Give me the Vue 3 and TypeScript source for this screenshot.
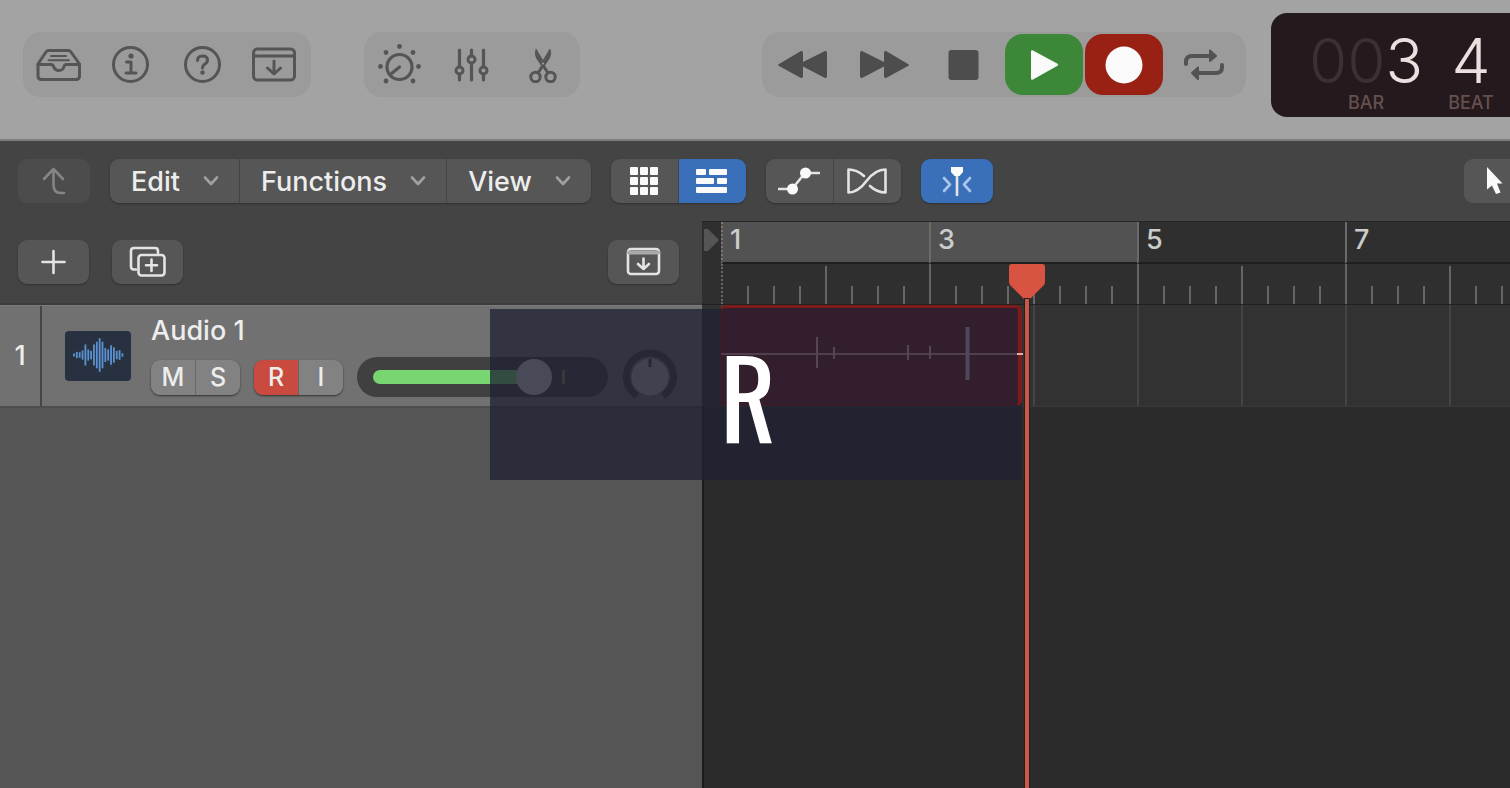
<script setup lang="ts">
import { computed, onBeforeUnmount, onMounted, ref } from 'vue'

interface Bar {
  number: number
  cycle: boolean
}

const barWidth = 104
const timelineStart = 721
const windowWidth = ref(window.innerWidth)
const onResize = () => {
  windowWidth.value = window.innerWidth
}
onMounted(() => window.addEventListener('resize', onResize))
onBeforeUnmount(() => window.removeEventListener('resize', onResize))

const bars = computed<Bar[]>(() => {
  const count = Math.max(1, Math.ceil((windowWidth.value - timelineStart) / barWidth))
  return Array.from({ length: count }, (_, i) => ({ number: i + 1, cycle: i < 4 }))
})
const beats = [1, 2, 3, 4]
const menus = ['Edit', 'Functions', 'View']
const volume = ref(74)
const fillWidth = computed(() => `${Math.round(volume.value * 2.2)}px`)
const waveBars = [4, 9, 8, 13, 30, 16, 12, 30, 38, 48, 38, 20, 16, 28, 22, 12, 14, 5]
</script>

<template>
  <div class="app">
    <header class="control-bar">
      <div class="group">
        <button class="tool" aria-label="Library">
          <svg width="46" height="36" viewBox="0 0 46 36" class="line">
            <path d="M2 17 L10 5 Q11 3.500 13 3.500 H32 Q34 3.500 35 5 L43.500 17 V29 Q43.500 32.500 40 32.500 H5.500 Q2 32.500 2 29 Z" />
            <path d="M2 17.500 H15 Q17 17.500 17.500 19.500 Q19 23.500 23 23.500 Q27 23.500 28 19.500 Q28.500 17.500 30.500 17.500 H43.500" />
            <path d="M15 9 H30 M12.500 13.200 H33" stroke-width="2" />
          </svg>
        </button>
        <button class="tool" aria-label="Inspector">
          <svg width="40" height="40" viewBox="0 0 40 40" class="line">
            <circle cx="19.500" cy="19.500" r="17" />
            <path d="M15.500 17 H20 V28 M15 28 H25" />
            <circle cx="20" cy="11" r="2.600" class="solid" />
          </svg>
        </button>
        <button class="tool" aria-label="Quick Help">
          <svg width="40" height="40" viewBox="0 0 40 40" class="line">
            <circle cx="19.500" cy="19.500" r="17" />
            <path d="M14.500 15.500 Q14.500 11 19.500 11 Q24.500 11 24.500 15 Q24.500 17.500 22 19 Q19.500 20.500 19.500 23" />
            <circle cx="19.500" cy="27.500" r="2.200" class="solid" />
          </svg>
        </button>
        <button class="tool" aria-label="Toolbar">
          <svg width="46" height="36" viewBox="0 0 46 36" class="line">
            <rect x="1.500" y="2" width="41" height="31" rx="4" />
            <path d="M2 9 H42 M22 14 V26.500 M15.500 21 L22 27 L28.500 21" />
          </svg>
        </button>
      </div>

      <div class="group">
        <button class="tool" aria-label="Smart Controls">
          <svg width="46" height="46" viewBox="0 0 46 46" class="line">
            <circle cx="22.500" cy="25" r="12.500" stroke-width="3.200" />
            <path d="M22.500 25 L14.500 31.500" stroke-width="3.200" />
            <g class="solid">
              <circle cx="22.500" cy="4.500" r="2.400" /><circle cx="9" cy="10.500" r="2.400" />
              <circle cx="36" cy="10.500" r="2.400" /><circle cx="3.500" cy="24.500" r="2.400" />
              <circle cx="41.500" cy="24.500" r="2.400" /><circle cx="9" cy="39" r="2.400" />
              <circle cx="36" cy="39" r="2.400" />
            </g>
          </svg>
        </button>
        <button class="tool" aria-label="Mixer">
          <svg width="36" height="36" viewBox="0 0 36 36" class="line">
            <path d="M5.500 3 V20 M5.500 27 V33 M17.500 3 V9 M17.500 16 V33 M29.500 3 V20 M29.500 27 V33" stroke-width="3.200" />
            <circle cx="5.500" cy="23.500" r="3.500" /><circle cx="17.500" cy="12.500" r="3.500" /><circle cx="29.500" cy="23.500" r="3.500" />
          </svg>
        </button>
        <button class="tool" aria-label="Editors">
          <svg width="32" height="36" viewBox="0 0 32 36" class="line">
            <circle cx="7.500" cy="30" r="4.700" /><circle cx="22.500" cy="30" r="4.700" />
            <path d="M10 26 L14.500 19 M20 26 L15.500 19" />
            <path d="M8 2.500 Q6.500 7 8.500 11 L14.500 20 L16.500 17 Z M22 2.500 Q23.500 7 21.500 11 L15.500 20 L13.500 17 Z" class="blade" />
          </svg>
        </button>
      </div>

      <div class="group transport">
        <button class="key" aria-label="Rewind">
          <svg width="52" height="32" viewBox="0 0 52 32" class="glyph">
            <path d="M1 15 L23 2 Q25 1.500 25 4 V13 L47 2 Q49 1.500 49 4 V27 Q49 29.500 47 29 L25 17.500 V27 Q25 29.500 23 29 L1 17 Q-1 16 1 15 Z" />
          </svg>
        </button>
        <button class="key" aria-label="Forward">
          <svg width="52" height="32" viewBox="0 0 52 32" class="glyph">
            <path d="M50 15 L28 2 Q26 1.500 26 4 V13 L4 2 Q2 1.500 2 4 V27 Q2 29.500 4 29 L26 17.500 V27 Q26 29.500 28 29 L50 17 Q52 16 50 15 Z" />
          </svg>
        </button>
        <button class="key" aria-label="Stop">
          <svg width="32" height="32" viewBox="0 0 32 32" class="glyph"><rect x="0.500" y="1" width="30" height="30" rx="3" /></svg>
        </button>
        <button class="key play" aria-label="Play">
          <svg width="30" height="32" viewBox="0 0 30 32" class="light">
            <path d="M2 2.500 Q2 0.500 4 1.500 L28.500 14.700 Q30 15.700 28.500 16.800 L4 30.500 Q2 31.500 2 29.500 Z" />
          </svg>
        </button>
        <button class="key record" aria-label="Record">
          <svg width="38" height="38" viewBox="0 0 38 38" class="light"><circle cx="19" cy="19" r="18.500" /></svg>
        </button>
        <button class="key" aria-label="Cycle">
          <svg width="42" height="34" viewBox="0 0 42 34" class="cycle-icon">
            <path d="M3 16 V14 Q3 8 9 8 H27 M39 17 V19 Q39 25 33 25 H15" />
            <path d="M27 2.500 L33 8 L27 13 Z M15 19.500 L9 25 L15 31 Z" class="tip" />
          </svg>
        </button>
      </div>

      <div class="lcd">
        <div class="readout">
          <span class="digits"><span class="dim">00</span>3</span>
          <span class="unit">BAR</span>
        </div>
        <div class="readout">
          <span class="digits">4</span>
          <span class="unit">BEAT</span>
        </div>
      </div>
    </header>

    <nav class="menu-bar">
      <button class="btn single disabled" aria-label="Go up">
        <svg width="26" height="32" viewBox="0 0 26 32" class="stroke-dim">
          <path d="M3 14 L12.500 4 L22 14 M12.500 5 V20 Q12.500 28 20 28 H23" />
        </svg>
      </button>
      <div class="segments menus">
        <button v-for="menu in menus" :key="menu" class="btn menu" aria-haspopup="menu">
          <span>{{ menu }}</span>
          <svg width="16" height="12" viewBox="0 0 16 12" class="chevron"><path d="M2 2.500 L8 9 L14 2.500" /></svg>
        </button>
      </div>
      <div class="segments">
        <button class="btn half" aria-label="Grid view">
          <svg width="28" height="28" viewBox="0 0 28 28" class="light">
            <g v-for="row in 3" :key="row">
              <rect v-for="col in 3" :key="col" :x="col * 10 - 10" :y="row * 10 - 10" width="8" height="8" rx="1" />
            </g>
          </svg>
        </button>
        <button class="btn half active" aria-label="Tracks view">
          <svg width="34" height="26" viewBox="0 0 34 26" class="light">
            <rect x="1" y="1" width="10" height="6" rx="1" /><rect x="14" y="1" width="18" height="6" rx="1" />
            <rect x="1" y="10" width="18" height="6" rx="1" /><rect x="22" y="10" width="10" height="6" rx="1" />
            <rect x="1" y="19" width="31" height="6" rx="1" />
          </svg>
        </button>
      </div>
      <div class="segments">
        <button class="btn half" aria-label="Automation">
          <svg width="42" height="30" viewBox="0 0 42 30" class="stroke-light">
            <path d="M1 23 H14 L27 7 H41" />
            <circle cx="14.500" cy="23" r="5.500" class="white" /><circle cx="27.500" cy="7" r="5.500" class="white" />
          </svg>
        </button>
        <button class="btn half" aria-label="Flex">
          <svg width="42" height="28" viewBox="0 0 42 28" class="stroke-light">
            <path d="M18 9 Q11 2.500 2.500 2.500 V25.500 Q12 25.500 20.500 14 Q29 2.500 39.500 2.500 V25.500 Q31 25.500 24 19" />
          </svg>
        </button>
      </div>
      <button class="btn single active" aria-label="Catch playhead">
        <svg width="30" height="32" viewBox="0 0 30 32" class="stroke-light">
          <path d="M2 13 L8 19.500 L2 26 M28 13 L22 19.500 L28 26" class="soft" />
          <path d="M15 8 V30" />
          <path d="M9 2 H21 V7 L17.500 11 H12.500 L9 7 Z" class="white" />
        </svg>
      </button>
      <button class="btn pointer" aria-label="Pointer tool">
        <svg width="18" height="32" viewBox="0 0 18 32" class="light">
          <path d="M1 2 V24.500 L6 20.500 L10 29 L14.500 27.500 L11 18.500 H16.500 Z" />
        </svg>
      </button>
    </nav>

    <main class="workspace">
      <section class="tracks">
        <div class="track-tools">
          <button class="btn add" aria-label="New track">
            <svg width="26" height="26" viewBox="0 0 26 26" class="stroke-light"><path d="M12.500 2 V24 M1.500 13 H23.500" /></svg>
          </button>
          <button class="btn add" aria-label="Duplicate track">
            <svg width="38" height="32" viewBox="0 0 38 32" class="stroke-light">
              <path d="M7 23.500 H5 Q2 23.500 2 20.500 V5 Q2 2 5 2 H26 Q29 2 29 5 V7" />
              <rect x="9.500" y="9" width="26" height="20.500" rx="3" />
              <path d="M22.500 13.500 V25 M17 19.200 H28" />
            </svg>
          </button>
          <button class="btn add import" aria-label="Track import">
            <svg width="36" height="30" viewBox="0 0 36 30" class="stroke-light">
              <rect x="2" y="2" width="31" height="25" rx="3" />
              <path d="M3 5.500 H32" class="header-fill" />
              <path d="M17.500 11.500 V22 M12 17 L17.500 22 L23 17" />
            </svg>
          </button>
        </div>

        <div class="track">
          <span class="track-number">1</span>
          <svg class="track-icon" width="66" height="50" viewBox="0 0 66 50">
            <rect width="66" height="50" rx="4" fill="#28313f" />
            <line
              v-for="(h, i) in waveBars" :key="i"
              :x1="9 + i * 2.850" :x2="9 + i * 2.850" :y1="24 - h * 0.350" :y2="24 + h * 0.350"
              stroke="#5b92d3" stroke-width="1.800"
            />
          </svg>
          <div class="track-body">
            <span class="track-name">Audio 1</span>
            <div class="track-controls">
              <div class="segments small">
                <button class="toggle">M</button>
                <button class="toggle">S</button>
              </div>
              <div class="segments small">
                <button class="toggle armed">R</button>
                <button class="toggle">I</button>
              </div>
              <div class="fader">
                <span class="fader-fill" :style="{ width: fillWidth }"></span>
                <span class="fader-mark"></span>
                <input v-model.number="volume" type="range" min="0" max="100" aria-label="Volume" />
              </div>
              <button class="pan" aria-label="Pan">
                <svg width="56" height="56" viewBox="0 0 56 56">
                  <path d="M15 47 A23.500 23.500 0 1 1 41 47" fill="none" stroke="#404040" stroke-width="7" />
                  <circle cx="28" cy="28" r="18.500" fill="#aaa" />
                  <path d="M28 10 V18" stroke="#404040" stroke-width="3" />
                </svg>
              </button>
            </div>
          </div>
        </div>
      </section>

      <section class="timeline">
        <div class="ruler">
          <svg class="start-flag" width="19" height="24" viewBox="0 0 19 24"><path d="M2 1 L6 1 L17 12 L6 23 L2 23 Z" fill="#555" /></svg>
          <div v-for="bar in bars" :key="bar.number" class="bar" :class="{ odd: bar.number % 2, cycle: bar.cycle, first: bar.number === 1 }">
            <span class="bar-label">{{ bar.number % 2 ? bar.number : '' }}</span>
            <div class="beats"><i v-for="beat in beats" :key="beat" class="beat"></i></div>
          </div>
        </div>
        <div class="lane">
          <div v-for="bar in bars" :key="bar.number" class="lane-bar"></div>
          <div class="region">
            <svg width="302" height="60" viewBox="0 0 302 60">
              <path d="M0 30 H296" stroke="#5d4b58" stroke-width="1.500" />
              <path d="M96 13 V44 M113 23 V35 M187 21 V36 M209 22 V35" stroke="#544656" stroke-width="2" />
              <path d="M246.500 3 V56" stroke="#50485a" stroke-width="4" />
              <path d="M296 30 H302" stroke="#e0b0a8" stroke-width="2" />
            </svg>
          </div>
        </div>
        <div class="playhead">
          <svg width="38" height="38" viewBox="0 0 38 38">
            <path d="M4 1 H34 Q37 1 37 4 V19 Q37 21 35.500 22.500 L21 37 H17 L2.500 22.500 Q1 21 1 19 V4 Q1 1 4 1 Z" fill="#d95343" />
          </svg>
          <span class="playhead-line"></span>
        </div>
      </section>

      <div class="key-overlay"><span class="key-label">R</span></div>
    </main>
  </div>
</template>

<style>
body {
  margin: 0;
  background: #2b2b2b;
}
</style>

<style scoped>
.app {
  display: flex;
  flex-direction: column;
  min-height: 100vh;
  overflow: hidden;
  font-family: Inter, "Liberation Sans", sans-serif;
  font-size: 27px;
  font-weight: 500;
  color: #ededed;
}
button {
  display: flex;
  align-items: center;
  justify-content: center;
  flex: none;
  margin: 0;
  padding: 0;
  border: 0;
  background: none;
  color: inherit;
  font: inherit;
}
svg {
  display: block;
  flex: none;
}

.control-bar {
  display: flex;
  align-items: flex-start;
  height: 139px;
  padding-left: 23px;
  background: #a3a3a3;
  border-bottom: 2px solid #7d7e7d;
}
.group {
  display: flex;
  flex: none;
  margin: 32px 53px 0 0;
  background: #9b9b9b;
  border-radius: 18px;
}
.tool {
  width: 72px;
  height: 65px;
}
.line {
  fill: none;
  stroke: #555;
  stroke-width: 3;
  stroke-linecap: round;
  stroke-linejoin: round;
}
.solid {
  fill: #555;
  stroke: none;
}
.blade {
  fill: #555;
  stroke-width: 1;
}
.transport {
  gap: 2px;
  margin: 32px 25px 0 129px;
  padding: 2px 3px;
}
.key {
  width: 78px;
  height: 61px;
  border-radius: 18px;
}
.play {
  background: #3c8838;
}
.record {
  background: #982114;
}
.glyph {
  fill: #4d4d4d;
}
.light {
  fill: #fafafa;
}
.cycle-icon {
  fill: none;
  stroke: #535353;
  stroke-width: 4;
  stroke-linecap: round;
  stroke-linejoin: round;
}
.tip {
  fill: #535353;
  stroke-width: 2;
}
.lcd {
  display: flex;
  flex: 1 0 0;
  min-width: 0;
  gap: 25px;
  height: 88px;
  margin-top: 13px;
  padding: 16px 0 0 38px;
  overflow: hidden;
  background: #24191c;
  border-radius: 16px 0 0 16px;
}
.readout {
  display: flex;
  flex: none;
  flex-direction: column;
  align-items: center;
}
.digits {
  font-size: 62px;
  line-height: 64px;
  font-weight: 300;
  color: #ecdfe0;
}
.dim {
  color: #3c3033;
}
.unit {
  font-size: 18px;
  line-height: 20px;
  color: #66504f;
}

.menu-bar {
  display: flex;
  align-items: center;
  height: 80px;
  padding-left: 18px;
  background: #444;
}
.btn {
  height: 44px;
  background: #565656;
}
.single,
.segments,
.add {
  border-radius: 9px;
  box-shadow: 0 1px 2px #303030;
}
.single {
  width: 72px;
}
.disabled {
  background: #4c4c4c;
  box-shadow: none;
}
.active {
  background: #3970b9;
}
.segments {
  display: flex;
  flex: none;
  gap: 1px;
  overflow: hidden;
  background: #444;
  margin-right: 20px;
}
.menus {
  margin-left: 20px;
}
.menu {
  gap: 23px;
  padding: 0 20px 0 21px;
}
.half {
  width: 67px;
}
.pointer {
  width: 46px;
  margin-left: auto;
  padding-left: 16px;
  border-radius: 9px 0 0 9px;
}
.chevron {
  fill: none;
  stroke: #a0a0a0;
  stroke-width: 2.6;
  stroke-linecap: round;
  stroke-linejoin: round;
}
.stroke-dim,
.stroke-light {
  fill: none;
  stroke: #e4e4e4;
  stroke-width: 2.6;
  stroke-linecap: round;
  stroke-linejoin: round;
}
.stroke-dim {
  stroke: #858585;
}
.white {
  fill: #fafafa;
  stroke: none;
}
.soft {
  stroke: #a9c6ea;
}
.header-fill {
  stroke: #aaa;
  stroke-width: 4;
}

.workspace {
  position: relative;
  display: flex;
  flex: 1;
  isolation: isolate;
}
.tracks {
  flex: none;
  width: 702px;
  background: #555;
}
.track-tools {
  display: flex;
  align-items: center;
  gap: 23px;
  height: 82px;
  padding: 0 23px 0 18px;
  background: #444;
  border-bottom: 2px solid #3d3d3d;
}
.add {
  width: 71px;
}
.import {
  margin-left: auto;
}
.track {
  display: flex;
  align-items: center;
  height: 100px;
  background: #717171;
  border-top: 1px solid #7b7b7b;
  border-bottom: 2px solid #4d4d4d;
}
.track-number {
  width: 40px;
  height: 100px;
  line-height: 100px;
  text-align: center;
  border-right: 2px solid #444;
}
.track-icon {
  margin-left: 23px;
}
.track-body {
  padding-top: 10px;
  margin-left: 20px;
}
.track-name {
  display: block;
  line-height: 32px;
}
.track-controls {
  display: flex;
  align-items: center;
  height: 60px;
}
.small {
  margin-right: 14px;
  background: #666;
}
.toggle {
  width: 44px;
  height: 35px;
  font-size: 25px;
  background: #828282;
}
.armed {
  background: #c94b3f;
}
.fader {
  display: grid;
  align-items: center;
  width: 251px;
  height: 40px;
  border-radius: 20px;
  background: #404040;
}
.fader > * {
  grid-area: 1 / 1;
}
.fader-fill {
  height: 14px;
  margin-left: 16px;
  border-radius: 7px;
  background: #77d572;
}
.fader-mark {
  width: 3px;
  height: 14px;
  margin-left: 205px;
  background: #8a8560;
}
.fader input {
  appearance: none;
  width: 100%;
  height: 36px;
  margin: 0;
  background: none;
}
.fader input::-webkit-slider-thumb {
  appearance: none;
  width: 36px;
  height: 36px;
  border-radius: 50%;
  background: #cdcdcd;
}
.pan {
  margin-left: 14px;
}

.timeline {
  position: relative;
  flex: 1;
  min-width: 0;
  overflow: hidden;
  background: #2b2b2b;
  box-shadow: inset 2px 0 #1c1c1c;
}
.ruler {
  display: flex;
  height: 82px;
  border-top: 1px solid #262626;
  border-bottom: 1px solid #202020;
  background: #2f2f2f;
}
.start-flag {
  margin-top: 6px;
}
.bar {
  display: flex;
  flex: none;
  flex-direction: column;
  width: 104px;
}
.bar-label {
  box-sizing: border-box;
  height: 42px;
  padding-left: 7px;
  line-height: 36px;
  color: #ccc;
  border-bottom: 2px solid #1f1f1f;
}
.odd .bar-label {
  border-left: 2px solid #6a6a6a;
}
.cycle .bar-label {
  background: #525252;
}
.first .bar-label {
  border-left: 2px dotted #777;
}
.beats {
  display: flex;
  align-items: flex-end;
  height: 40px;
}
.beat {
  box-sizing: border-box;
  width: 26px;
  height: 18px;
  border-left: 2px solid #666;
}
.beat:first-child {
  height: 38px;
}
.odd .beat:first-child {
  height: 40px;
}
.first .beat:first-child {
  border-left-style: dotted;
}
.lane {
  position: relative;
  display: flex;
  height: 101px;
  padding-left: 19px;
  background: #323232;
  border-bottom: 1px solid #3a3a3a;
}
.lane-bar {
  box-sizing: border-box;
  flex: none;
  width: 104px;
  border-left: 2px solid #444;
}
.region {
  position: absolute;
  z-index: 1;
  top: 0;
  left: 18px;
  box-sizing: border-box;
  width: 302px;
  height: 101px;
  padding-top: 16px;
  border: 1px solid #421b22;
  border-top: 3px solid #7c1c1a;
  border-right: 4px solid #7c1c1a;
  border-radius: 6px;
  background: #321e2d;
}
.playhead {
  position: absolute;
  z-index: 2;
  top: 42px;
  bottom: 0;
  left: 306px;
  display: flex;
  flex-direction: column;
  align-items: center;
}
.playhead-line {
  flex: 1;
  width: 4px;
  margin-top: -2px;
  background: #c9584a;
  box-shadow: 0 0 0 1px #241f1f;
}
.key-overlay {
  position: absolute;
  top: 88px;
  left: 50%;
  box-sizing: border-box;
  display: flex;
  align-items: center;
  justify-content: center;
  width: 532px;
  height: 171px;
  margin-left: -265px;
  padding-right: 16px;
  background: rgba(30, 33, 50, 0.76);
}
.key-label {
  position: relative;
  z-index: 3;
  font-family: "Oswald", "Roboto Condensed", "Open Sans Condensed", "Liberation Sans Narrow", "DejaVu Sans Condensed", sans-serif;
  font-size: 108px;
  font-weight: 400;
  line-height: 171px;
  color: #fff;
}
</style>
